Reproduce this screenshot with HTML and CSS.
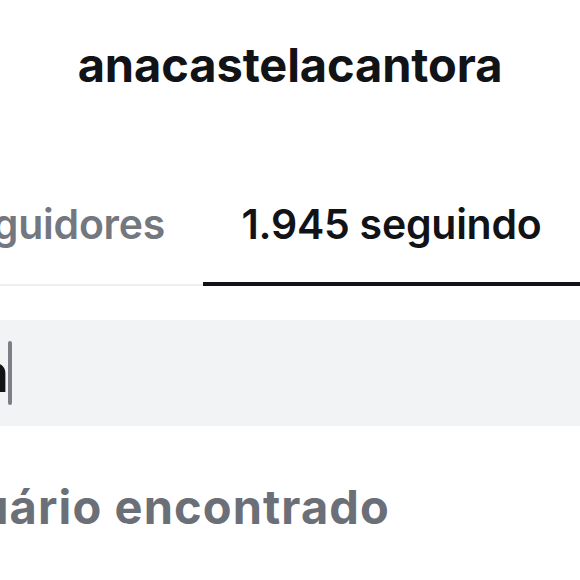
FILE: index.html
```html
<!DOCTYPE html>
<html lang="pt-BR">
<head>
<meta charset="utf-8">
<title>anacastelacantora</title>
<link rel="stylesheet" href="styles.css">
</head>
<body>
  <header class="title">anacastelacantora</header>

  <nav class="tabs">
    <div class="tab tab-side"><span>16 mi seguidores</span></div>
    <div class="tab tab-active"><span>1.945 seguindo</span></div>
  </nav>

  <div class="search">
    <div class="query"><span>ana</span></div>
    <div class="caret"></div>
  </div>

  <div class="empty"><span>Nenhum usuário encontrado</span></div>
</body>
</html>
```

FILE: styles.css
```css
html, body {
  margin: 0;
  padding: 0;
  background: #ffffff;
}

body {
  width: 580px;
  height: 580px;
  overflow: hidden;
  font-family: Inter, "Noto Sans", sans-serif;
  color: #121316;
}

.title {
  padding-top: 36px;
  font-size: 47px;
  line-height: 57px;
  font-weight: 700;
  text-align: center;
  letter-spacing: -0.1px;
}

/* tab strip; first tab runs off the left edge */
.tabs {
  display: flex;
  margin-top: 106px;
  margin-left: -174px;
}

.tab {
  flex: 0 0 377px;
  display: flex;
  justify-content: center;
  white-space: nowrap;
  font-size: 41px;
  line-height: 50px;
  font-weight: 560;
  letter-spacing: -0.25px;
}

.tab-side {
  justify-content: flex-end;
  padding-right: 38px;
  box-sizing: border-box;
  padding-bottom: 35px;
  border-bottom: 2px solid #efefef;
  color: #737780;
}

.tab-active {
  padding-bottom: 33px;
  border-bottom: 4px solid #121316;
  color: #121316;
}

.search {
  display: flex;
  align-items: center;
  margin-top: 34px;
  height: 106px;
  background: #f2f3f5;
}

/* typed query; its start scrolls off the left edge */
.query {
  width: 8px;
  display: flex;
  justify-content: flex-end;
  white-space: nowrap;
  font-size: 53px;
  line-height: 64px;
  font-weight: 600;
  letter-spacing: -1px;
  color: #121316;
}

.caret {
  width: 4px;
  height: 64px;
  border-radius: 2px;
  background: #7c7f87;
}

.empty {
  width: 390px;
  display: flex;
  justify-content: flex-end;
  white-space: nowrap;
  margin-top: 52px;
  font-size: 47px;
  line-height: 57px;
  font-weight: 700;
  letter-spacing: 1.1px;
  color: #6b6f77;
}
```
